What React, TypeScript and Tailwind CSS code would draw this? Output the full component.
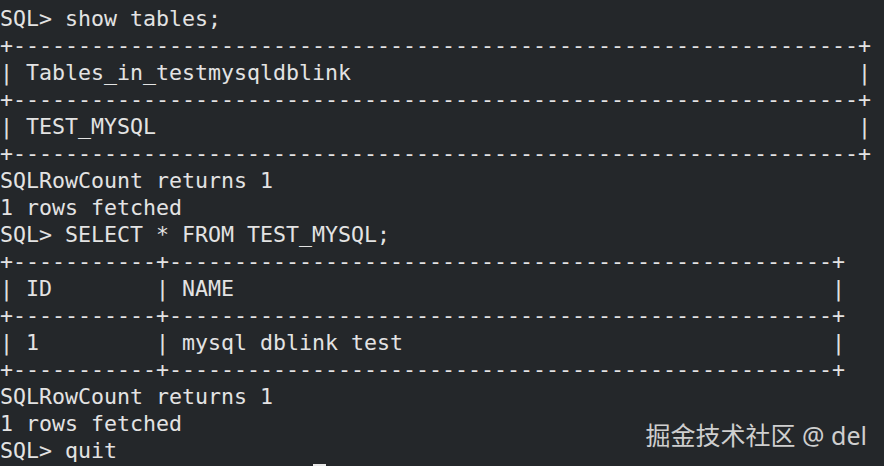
import React from "react";

const d = (n: number) => "-".repeat(n);
const pad = (s: string, n: number) => s + " ".repeat(Math.max(0, n - s.length));

const b1 = "+" + d(65) + "+";
const b2 = "+" + d(11) + "+" + d(51) + "+";

const lines: string[] = [
  "SQL> show tables;",
  b1,
  "| " + pad("Tables_in_testmysqldblink", 64) + "|",
  b1,
  "| " + pad("TEST_MYSQL", 64) + "|",
  b1,
  "SQLRowCount returns 1",
  "1 rows fetched",
  "SQL> SELECT * FROM TEST_MYSQL;",
  b2,
  "| " + pad("ID", 10) + "| " + pad("NAME", 50) + "|",
  b2,
  "| " + pad("1", 10) + "| " + pad("mysql dblink test", 50) + "|",
  b2,
  "SQLRowCount returns 1",
  "1 rows fetched",
  "SQL> quit",
];

export default function App() {
  return (
    <div className="relative w-[884px] h-[466px] overflow-hidden bg-[#24272a] text-[#e3e3e3]">
      <div
        className="pt-[5px] pl-0 text-[21.6px] leading-[27px] whitespace-pre"
        style={{ fontFamily: '"DejaVu Sans Mono", monospace' }}
      >
        {lines.map((l, i) => (
          <div key={i} className="h-[27px]">
            {l}
          </div>
        ))}
        <div className="h-[27px]">
          <div className="ml-[313px] h-[3px] w-[13px] bg-[#e8e8e8]" />
        </div>
      </div>
      <div
        className="absolute right-[17px] top-[419px] text-[25px] leading-[32px] text-[#cfcfcf]"
        style={{ fontFamily: '"Noto Sans", "Noto Sans CJK SC", sans-serif' }}
      >
        掘金技术社区 @ del
      </div>
    </div>
  );
}
